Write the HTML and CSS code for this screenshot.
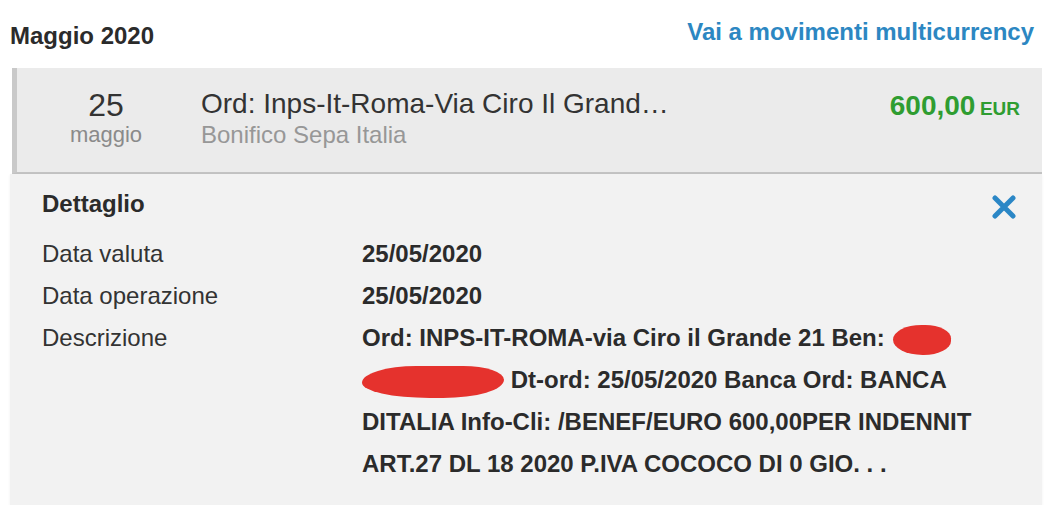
FILE: index.html
```html
<!DOCTYPE html>
<html lang="it">
<head>
<meta charset="utf-8">
<title>Movimenti</title>
<link rel="stylesheet" href="styles.css">
</head>
<body>
<div class="page">
  <header class="topbar">
    <h2 class="month">Maggio 2020</h2>
    <a class="mc-link" href="#">Vai a movimenti multicurrency</a>
  </header>

  <section class="mov">
    <div class="mov-row">
      <div class="mov-date">
        <div class="day">25</div>
        <div class="mon">maggio</div>
      </div>
      <div class="mov-info">
        <div class="mov-title">Ord: Inps-It-Roma-Via Ciro Il Grand…</div>
        <div class="mov-sub">Bonifico Sepa Italia</div>
      </div>
      <div class="mov-amount"><span class="amt">600,00</span> <span class="cur">EUR</span></div>
    </div>

    <div class="detail">
      <div class="detail-head">
        <h3 class="detail-title">Dettaglio</h3>
        <button class="close" aria-label="Chiudi">
          <svg width="24" height="24" viewBox="0 0 24 24"><path d="M3 3 L21 21 M21 3 L3 21" stroke="#2b87c6" stroke-width="5" stroke-linecap="round" fill="none"/></svg>
        </button>
      </div>
      <dl class="detail-grid">
        <dt>Data valuta</dt>
        <dd>25/05/2020</dd>
        <dt>Data operazione</dt>
        <dd>25/05/2020</dd>
        <dt>Descrizione</dt>
        <dd class="desc">Ord: INPS-IT-ROMA-via Ciro il Grande 21 Ben: <span class="redact r1"></span> <span class="redact r2"></span> Dt-ord: 25/05/2020 Banca Ord: BANCA DITALIA Info-Cli: /BENEF/EURO 600,00PER INDENNIT ART.27 DL 18 2020 P.IVA COCOCO DI 0 GIO. . .</dd>
      </dl>
    </div>
  </section>
</div>
</body>
</html>
```

FILE: styles.css
```css
* { box-sizing: border-box; }

html, body {
  margin: 0;
  padding: 0;
  background: #ffffff;
}

body {
  font-family: "Liberation Sans", Arial, Helvetica, sans-serif;
  color: #333333;
}

.page {
  width: 1064px;
}

.topbar {
  display: flex;
  justify-content: space-between;
  align-items: flex-start;
  padding: 17px 30px 0 10px;
  height: 68px;
}

.month {
  margin: 4px 0 0 0;
  font-size: 24px;
  line-height: 30px;
  font-weight: bold;
  color: #2b2b2b;
}

.mc-link {
  font-size: 24px;
  line-height: 30px;
  font-weight: bold;
  color: #2c87c2;
  text-decoration: none;
}

.mov {
  margin: 0 22px 0 10px;
}

.mov-row {
  display: flex;
  align-items: flex-start;
  margin-left: 2px;
  background: #ebebeb;
  border-left: 5px solid #c9c9c9;
  border-bottom: 2px solid #c3c3c3;
  padding: 20px 22px 22px 0;
}

.mov-date {
  width: 178px;
  text-align: center;
  padding-top: 1px;
}

.day {
  font-size: 32px;
  line-height: 32px;
  color: #333333;
}

.mon {
  font-size: 22px;
  line-height: 28px;
  color: #8a8a8a;
}

.mov-info {
  flex: 1;
  padding-left: 6px;
}

.mov-title {
  font-size: 28px;
  line-height: 32px;
  color: #333333;
  white-space: nowrap;
}

.mov-sub {
  font-size: 24px;
  line-height: 30px;
  color: #979797;
}

.mov-amount {
  padding-top: 2px;
  line-height: 32px;
  white-space: nowrap;
}

.amt {
  font-size: 28px;
  font-weight: bold;
  color: #2f9d31;
}

.cur {
  font-size: 19px;
  font-weight: bold;
  color: #2f9d31;
}

.detail {
  background: #f2f2f2;
  padding: 15px 26px 20px 32px;
  box-shadow: 0 1px 3px rgba(0, 0, 0, 0.06);
}

.detail-head {
  display: flex;
  justify-content: space-between;
  align-items: flex-start;
  margin-bottom: 14px;
}

.detail-title {
  margin: 0;
  font-size: 24px;
  line-height: 30px;
  font-weight: bold;
  color: #2b2b2b;
}

.close {
  border: 0;
  background: transparent;
  padding: 0;
  margin-top: 6px;
  width: 24px;
  height: 24px;
  cursor: pointer;
}

.close svg { display: block; }

.detail-grid {
  display: grid;
  grid-template-columns: 320px 620px;
  margin: 0;
  font-size: 24px;
  line-height: 42px;
}

.detail-grid dt {
  color: #333333;
}

.detail-grid dd {
  margin: 0;
  font-weight: bold;
  color: #2b2b2b;
}

.redact {
  display: inline-block;
  vertical-align: middle;
  background: #e5322d;
}

.r1 {
  width: 58px;
  height: 30px;
  border-radius: 50% 45% 48% 52%;
  margin-left: 2px;
}

.r2 {
  width: 142px;
  height: 32px;
  border-radius: 40% 30% 45% 50% / 55% 45% 60% 50%;
}
```
